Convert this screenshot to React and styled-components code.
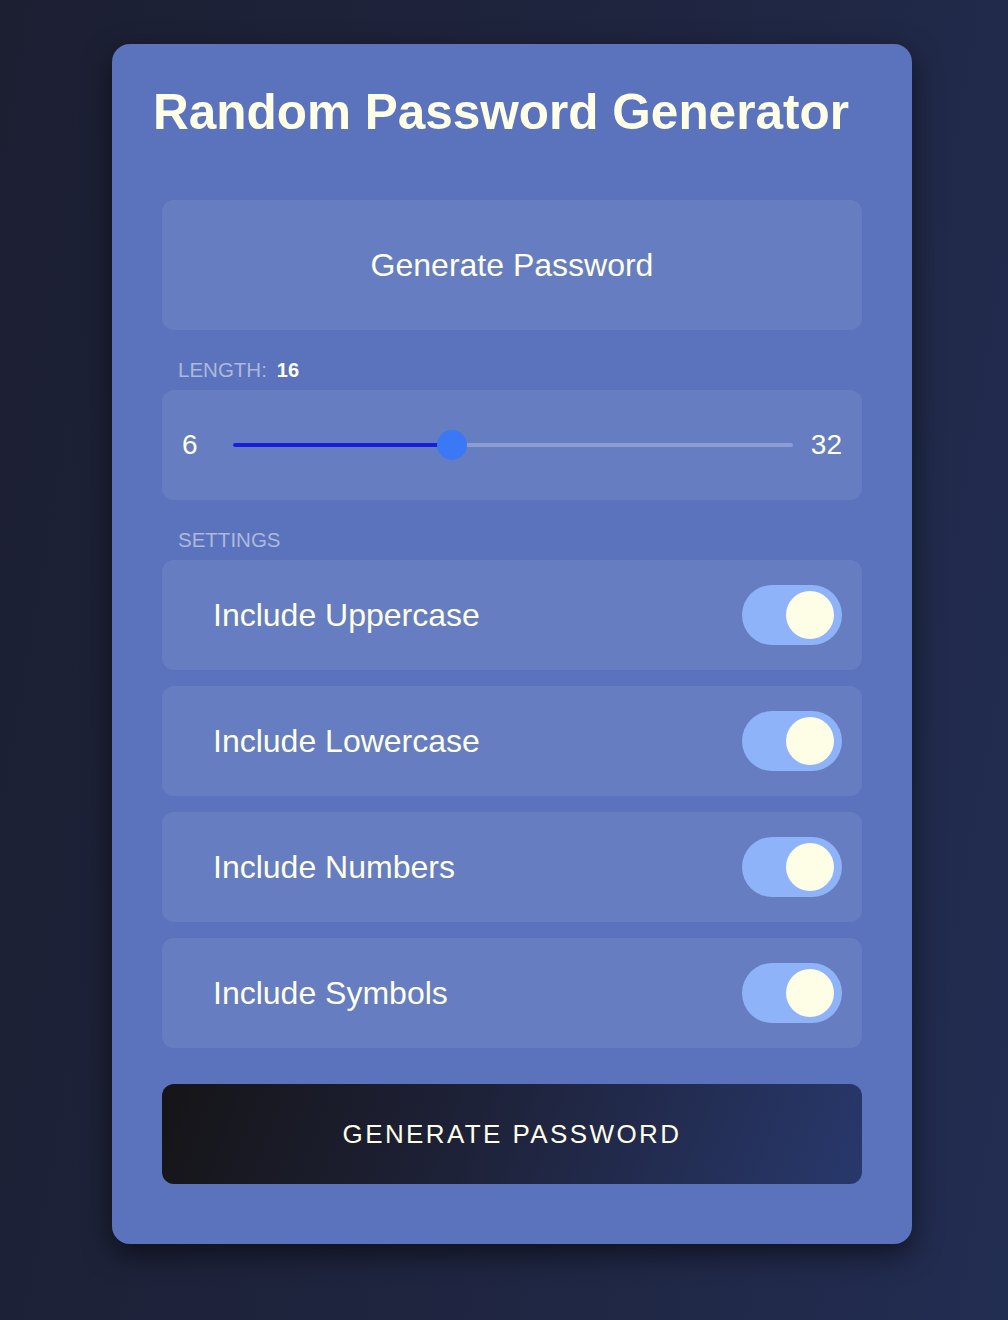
import React, { useState } from 'react';
import styled, { createGlobalStyle } from 'styled-components';

const GlobalStyle = createGlobalStyle`
  html, body {
    margin: 0;
    padding: 0;
  }
  body {
    min-height: 1320px;
    background: linear-gradient(100deg, #1c1f32 0%, #1f2540 55%, #222d52 100%);
    font-family: "Liberation Sans", Arial, Helvetica, sans-serif;
    color: #fefee6;
  }
`;

const Page = styled.div`
  display: flex;
  justify-content: center;
  padding: 44px 0 76px 16px;
`;

const Card = styled.div`
  width: 800px;
  box-sizing: border-box;
  padding: 38px 50px 60px;
  background: #5a73bc;
  border-radius: 18px;
  box-shadow: 0 10px 28px rgba(0, 0, 0, 0.55);
  display: flex;
  flex-direction: column;
`;

const Title = styled.h1`
  margin: 0 0 58px -9px;
  font-size: 49.5px;
  line-height: 60px;
  font-weight: 700;
  color: #fefee6;
  white-space: nowrap;
`;

const Panel = styled.div`
  background: rgba(255, 255, 255, 0.08);
  border-radius: 12px;
  box-sizing: border-box;
  height: ${p => p.$h}px;
  display: flex;
  align-items: center;
  justify-content: ${p => p.$center ? 'center' : 'space-between'};
  padding: ${p => p.$pad || '0 20px'};
`;

const Result = styled.span`
  font-size: 32px;
  color: #fefee6;
`;

const SectionLabel = styled.div`
  margin: 28px 0 8px 16px;
  font-size: 20.5px;
  line-height: 24px;
  color: #acb9dd;
  text-transform: uppercase;
`;

const LabelValue = styled.span`
  margin-left: 10px;
  font-size: 20px;
  color: #fefee6;
  font-weight: 700;
`;

const Bound = styled.span`
  font-size: 28px;
  color: #fefee6;
`;

const Track = styled.div`
  position: relative;
  width: 560px;
  height: 4px;
  margin: 0 16px 0 34px;
  border-radius: 2px;
  background: rgba(255, 255, 255, 0.25);
`;

const Fill = styled.div`
  position: absolute;
  left: 0;
  top: 0;
  bottom: 0;
  border-radius: 2px;
  background: #1620d8;
`;

const Thumb = styled.div`
  position: absolute;
  top: 50%;
  width: 30px;
  height: 30px;
  margin: -15px 0 0 -15px;
  border-radius: 50%;
  background: #3a78f6;
`;

const Settings = styled.div`
  display: flex;
  flex-direction: column;
  gap: 16px;
`;

const SettingText = styled.span`
  font-size: 32px;
  color: #fefee6;
`;

const Switch = styled.button`
  width: 100px;
  height: 60px;
  border: none;
  border-radius: 30px;
  background: ${p => p.$on ? '#8fb3f8' : 'rgba(255,255,255,0.2)'};
  display: flex;
  align-items: center;
  justify-content: ${p => p.$on ? 'flex-end' : 'flex-start'};
  padding: 0 8px 0 6px;
  cursor: pointer;
`;

const Knob = styled.span`
  width: 48px;
  height: 48px;
  border-radius: 50%;
  background: #fefee6;
`;

const GenerateButton = styled.button`
  margin-top: 36px;
  height: 100px;
  border: none;
  border-radius: 12px;
  background: linear-gradient(110deg, #151417 0%, #1e2239 45%, #28386c 100%);
  color: #fefee6;
  font-family: "Liberation Sans", Arial, Helvetica, sans-serif;
  font-size: 26px;
  letter-spacing: 2.4px;
  text-transform: uppercase;
  cursor: pointer;
`;

const MIN = 6;
const MAX = 32;

export default function App() {
  let [length] = useState(16);
  let [opts, setOpts] = useState({
    upper: true,
    lower: true,
    numbers: true,
    symbols: true,
  });

  // thumb centre like a native range: radius kept inside the track
  let frac = (length - MIN) / (MAX - MIN);
  let thumbX = 15 + frac * (560 - 30);

  const rows = [
    ['upper', 'Include Uppercase'],
    ['lower', 'Include Lowercase'],
    ['numbers', 'Include Numbers'],
    ['symbols', 'Include Symbols'],
  ];

  return (
    <>
      <GlobalStyle />
      <Page>
        <Card>
          <Title>Random Password Generator</Title>

          <Panel $h={130} $center>
            <Result>Generate Password</Result>
          </Panel>

          <SectionLabel>
            Length:<LabelValue>{length}</LabelValue>
          </SectionLabel>
          <Panel $h={110}>
            <Bound>{MIN}</Bound>
            <Track>
              <Fill style={{ width: thumbX }} />
              <Thumb style={{ left: thumbX }} />
            </Track>
            <Bound>{MAX}</Bound>
          </Panel>

          <SectionLabel>Settings</SectionLabel>
          <Settings>
            {rows.map(([key, label]) => (
              <Panel key={key} $h={110} $pad="0 20px 0 51px">
                <SettingText>{label}</SettingText>
                <Switch
                  $on={opts[key]}
                  onClick={() => setOpts({ ...opts, [key]: !opts[key] })}
                >
                  <Knob />
                </Switch>
              </Panel>
            ))}
          </Settings>

          <GenerateButton>Generate Password</GenerateButton>
        </Card>
      </Page>
    </>
  );
}
